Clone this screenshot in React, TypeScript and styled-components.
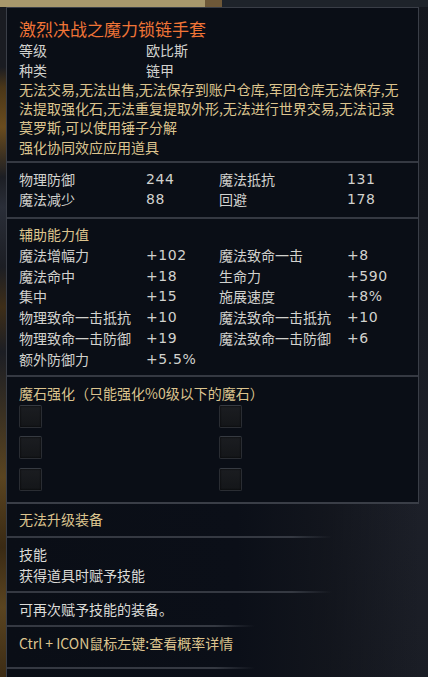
import { Fragment } from 'react';
import styled, { createGlobalStyle } from 'styled-components';

const GlobalStyle = createGlobalStyle`
  html, body {
    margin: 0;
    padding: 0;
    background: #151820;
  }
  body {
    font-family: "Noto Sans CJK SC", "Noto Sans", sans-serif;
  }
`;

// game scene behind the tooltip: beige frame on top, item column on the left
const Page = styled.div`
  width: 428px;
  height: 677px;
  overflow: hidden;
  box-sizing: border-box;
  padding: 7px 0 0 6px;
  background-color: #161920;
  background-image:
    linear-gradient(90deg, #a8986c 0, #a8986c 205px, #6e5838 205px, #6e5838 222px, #1e232a 222px, #1e232a 100%),
    linear-gradient(180deg, #1a1c22 0, #1a1c22 60px, #4a3618 80px, #6a4c1e 120px, #1c1e24 170px, #2a2e38 200px, #1c1e24 260px, #3e2e18 300px, #1c1e24 345px, #5a4420 470px, #3a2a14 540px, #5a4420 600px, #3a2a14 677px),
    linear-gradient(160deg, #13161d 0, #161920 45%, #1d2029 75%, #1a1d25 100%);
  background-size: 100% 7px, 6px 100%, 100% 100%;
  background-position: 0 0, 0 7px, 0 0;
  background-repeat: no-repeat;
`;

const Panel = styled.div`
  width: 413px;
  box-sizing: border-box;
  background: #0a0e16;
  border: 1px solid #3a3e47;
  border-bottom: 2px solid #3a3e47;
`;

const Lower = styled.div`
  width: 413px;
  height: 200px;
  box-sizing: border-box;
  border-left: 1px solid #3a3e47;
  background: linear-gradient(90deg, #0a0e16 0, #0b0f18 230px, rgba(14, 17, 24, 0.7) 320px, rgba(22, 25, 32, 0) 413px);
`;

const Section = styled.div<{ $pt?: number; $pb?: number }>`
  padding: ${(p) => p.$pt ?? 0}px 12px ${(p) => p.$pb ?? 0}px 12px;
`;

const Divider = styled.div<{ $fade?: number }>`
  height: 2px;
  background: ${(p) =>
    p.$fade
      ? `linear-gradient(90deg, #353942 0, #353942 ${p.$fade - 40}px, rgba(53, 57, 66, 0) ${p.$fade}px)`
      : '#353942'};
`;

const Title = styled.div`
  color: #f07436;
  font-size: 17px;
  line-height: 22px;
`;

const Grid = styled.div<{ $lh: number }>`
  display: grid;
  grid-template-columns: 127px 73px 128px 1fr;
  line-height: ${(p) => p.$lh}px;
  font-size: 14px;
`;

const PairGrid = styled.div`
  display: grid;
  grid-template-columns: 127px 1fr;
  line-height: 20px;
  font-size: 14px;
`;

const Label = styled.span`
  color: #d2d2ce;
  white-space: nowrap;
`;

const Value = styled.span`
  color: #d2d2ce;
  font-family: "DejaVu Sans", "Noto Sans CJK SC", sans-serif;
  font-size: 14px;
  letter-spacing: 0.6px;
`;

const Gold = styled.div<{ $lh?: number }>`
  color: #dcc48e;
  font-size: 14px;
  line-height: ${(p) => p.$lh ?? 20}px;
`;

const White = styled.div<{ $lh?: number }>`
  color: #dcdcd8;
  font-size: 14px;
  line-height: ${(p) => p.$lh ?? 20}px;
`;

const Sockets = styled.div`
  display: grid;
  grid-template-columns: 200px 23px;
  row-gap: 8.5px;
  margin-top: 2px;
`;

const Socket = styled.div`
  width: 23px;
  height: 23px;
  box-sizing: border-box;
  border-radius: 2px;
  border: 1px solid #2a2d33;
  border-top-color: #363a41;
  background: linear-gradient(180deg, #1b1d21 0, #141619 100%);
  box-shadow: inset 0 0 2px #000;
`;

const basic = [
  ['等级', '欧比斯'],
  ['种类', '链甲'],
];

const defense = [
  ['物理防御', '244', '魔法抵抗', '131'],
  ['魔法减少', '88', '回避', '178'],
];

const extra = [
  ['魔法增幅力', '+102', '魔法致命一击', '+8'],
  ['魔法命中', '+18', '生命力', '+590'],
  ['集中', '+15', '施展速度', '+8%'],
  ['物理致命一击抵抗', '+10', '魔法致命一击抵抗', '+10'],
  ['物理致命一击防御', '+19', '魔法致命一击防御', '+6'],
  ['额外防御力', '+5.5%', '', ''],
];

function StatRows({ rows }: { rows: string[][] }) {
  return (
    <>
      {rows.map((r, i) =>
        r.map((c, j) =>
          j % 2 === 0 ? <Label key={`${i}-${j}`}>{c}</Label> : <Value key={`${i}-${j}`}>{c}</Value>
        )
      )}
    </>
  );
}

export default function App() {
  return (
    <Page>
      <GlobalStyle />
      <Panel>
        <Section $pt={10} $pb={4}>
          <Title>激烈决战之魔力锁链手套</Title>
          <PairGrid>
            {basic.map(([l, v]) => (
              <Fragment key={l}>
                <Label>{l}</Label>
                <Label>{v}</Label>
              </Fragment>
            ))}
          </PairGrid>
          <Gold $lh={19}>
            无法交易,无法出售,无法保存到账户仓库,军团仓库无法保存,无法提取强化石,无法重复提取外形,无法进行世界交易,无法记录莫罗斯,可以使用锤子分解
          </Gold>
          <Gold>强化协同效应应用道具</Gold>
        </Section>
        <Divider />
        <Section $pt={6} $pb={8}>
          <Grid $lh={20}>
            <StatRows rows={defense} />
          </Grid>
        </Section>
        <Divider />
        <Section $pt={5} $pb={5}>
          <Gold $lh={20.8}>辅助能力值</Gold>
          <Grid $lh={20.8}>
            <StatRows rows={extra} />
          </Grid>
        </Section>
        <Divider />
        <Section $pt={6} $pb={11}>
          <Gold>魔石强化（只能强化%0级以下的魔石）</Gold>
          <Sockets>
            {Array.from({ length: 6 }).map((_, i) => (
              <Socket key={i} />
            ))}
          </Sockets>
        </Section>
      </Panel>
      <Lower>
        <Section $pt={5} $pb={7}>
          <Gold>无法升级装备</Gold>
        </Section>
        <Divider $fade={325} />
        <Section $pt={6} $pb={5}>
          <White $lh={21}>技能</White>
          <White $lh={21}>获得道具时赋予技能</White>
        </Section>
        <Divider $fade={325} />
        <Section $pt={6} $pb={6}>
          <White>可再次赋予技能的装备。</White>
        </Section>
        <Divider $fade={248} />
        <Section $pt={6} $pb={14}>
          <Gold>Ctrl + ICON鼠标左键:查看概率详情</Gold>
        </Section>
        <Divider $fade={248} />
      </Lower>
    </Page>
  );
}
